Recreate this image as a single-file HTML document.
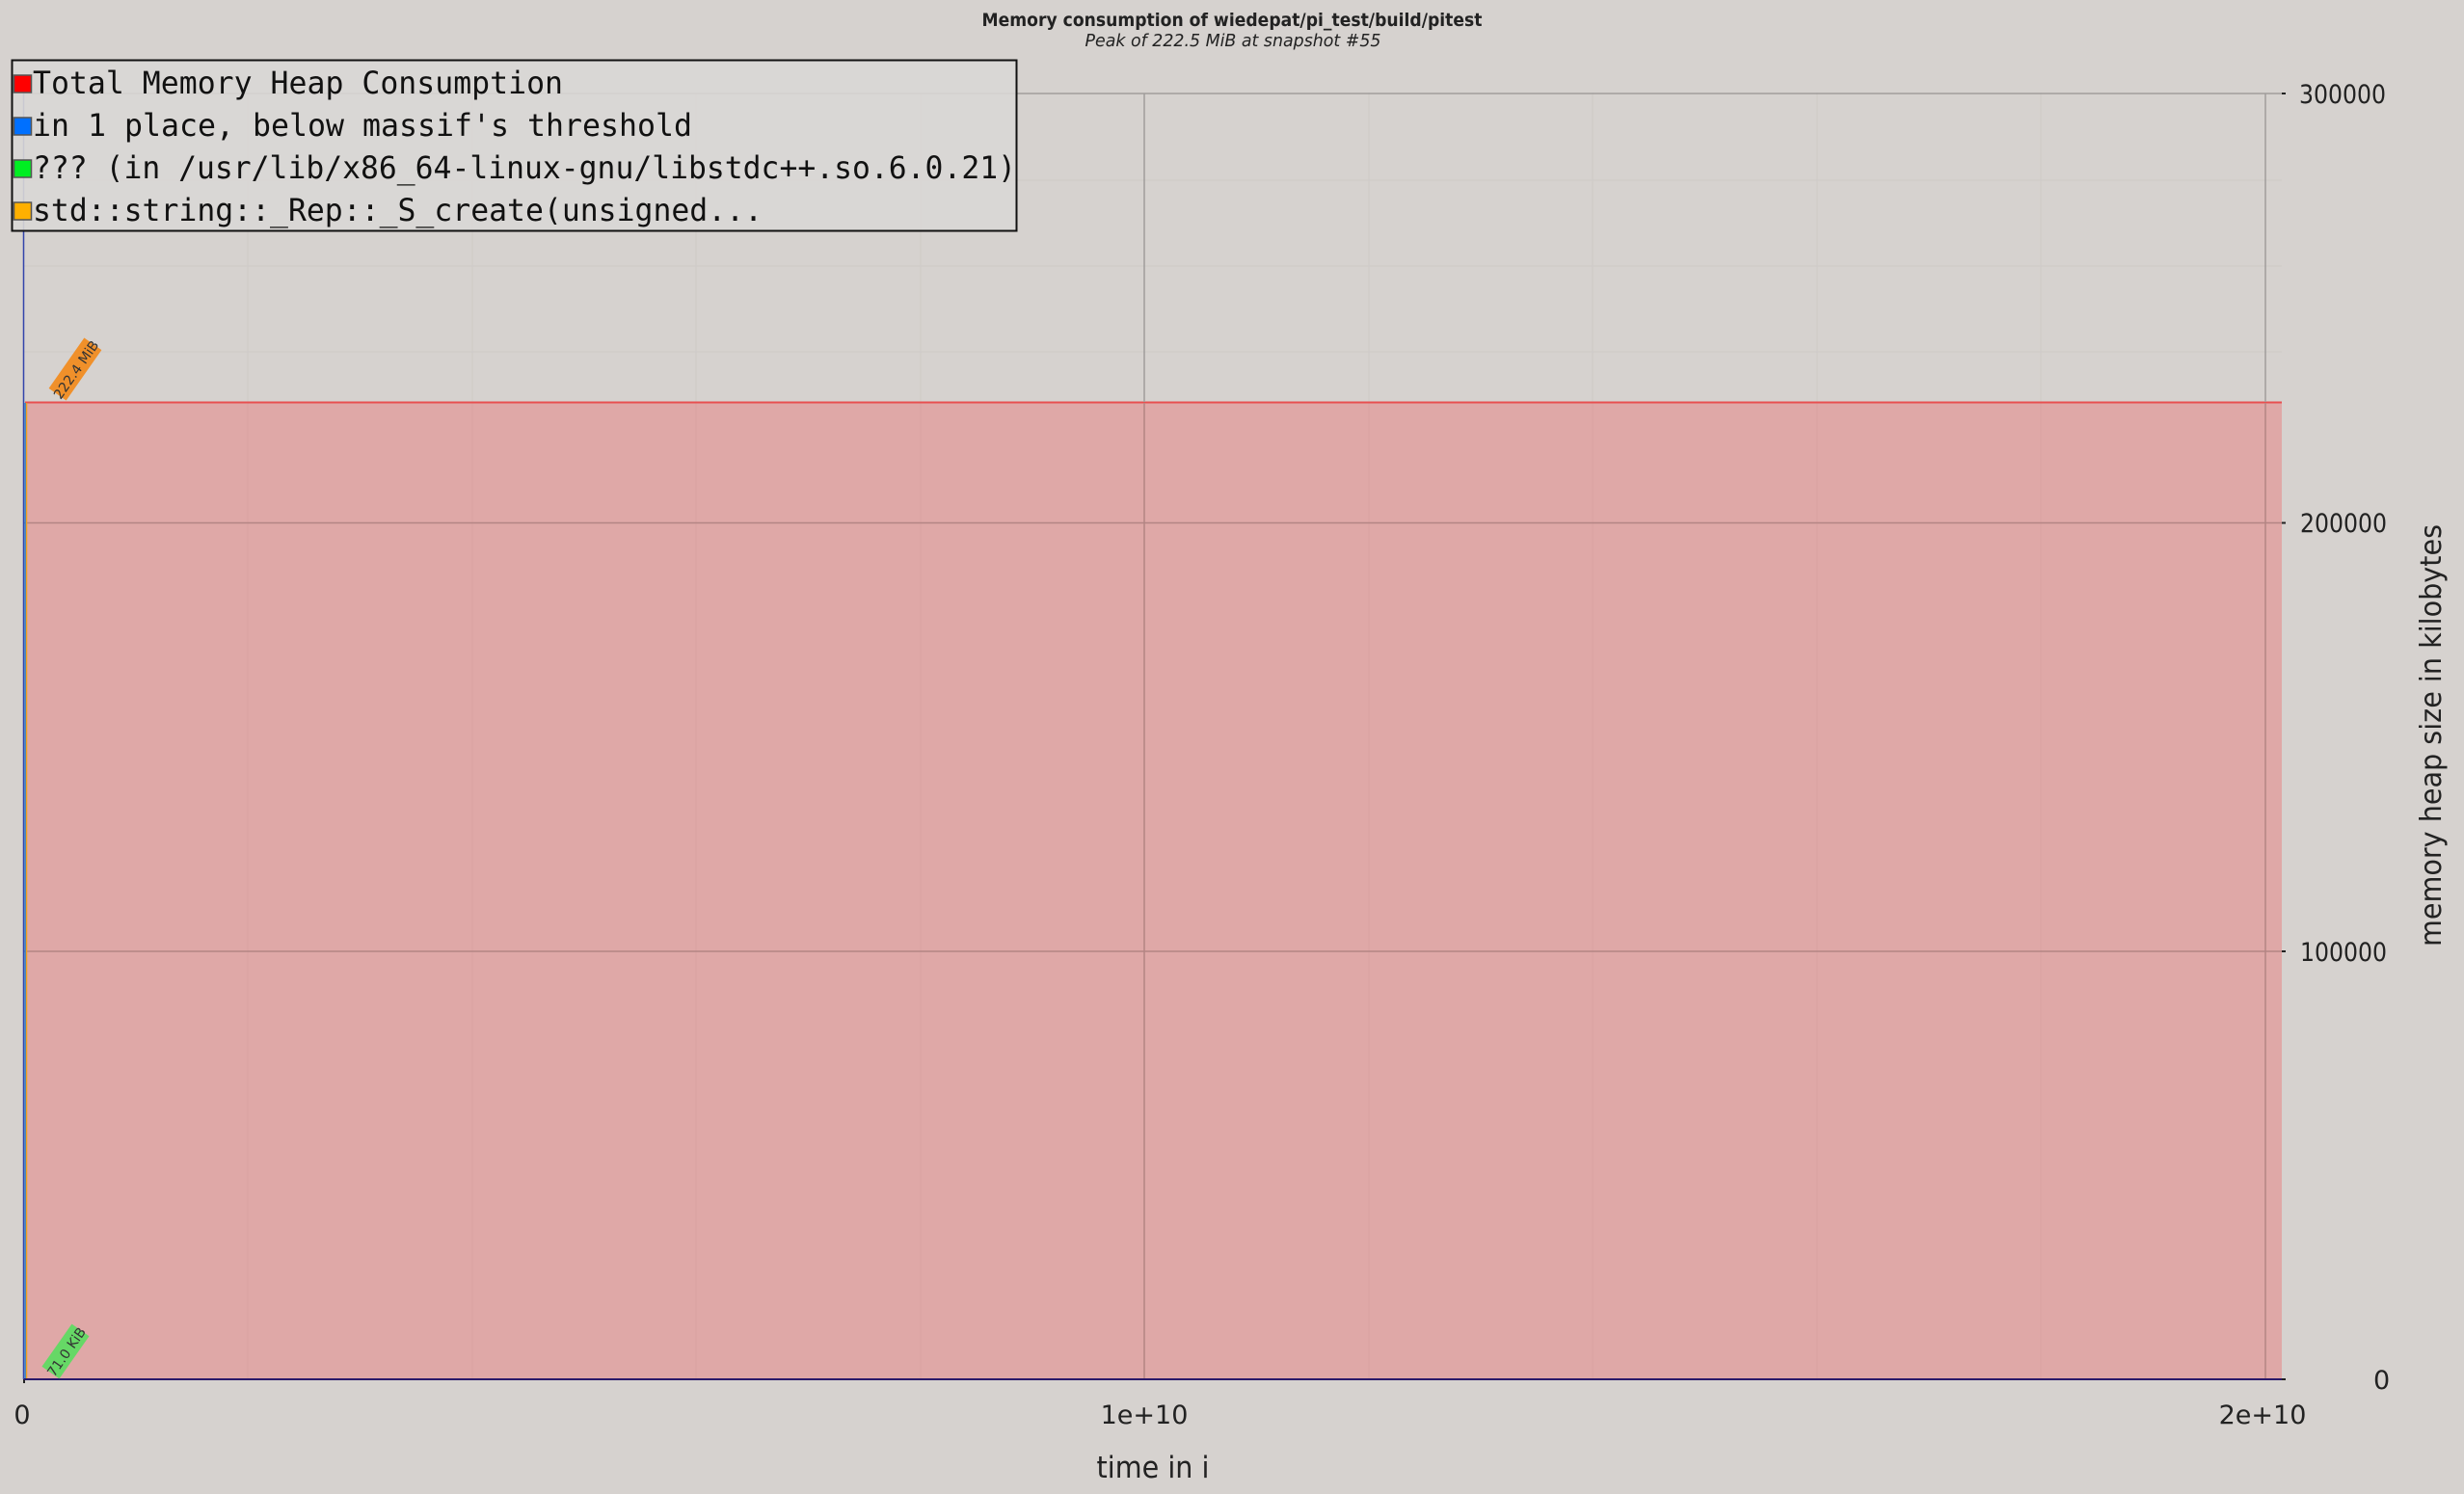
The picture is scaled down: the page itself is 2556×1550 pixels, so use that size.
<!DOCTYPE html>
<html><head><meta charset="utf-8"><style>
html,body{margin:0;padding:0;background:#d6d2cf;}
svg{display:block}
</style></head><body>
<svg width="2556" height="1550" viewBox="0 0 2556 1550" xmlns="http://www.w3.org/2000/svg">
<rect width="2556" height="1550" fill="#d6d2cf"/>
<text x="1278" y="27" text-anchor="middle" font-family="DejaVu Sans, Liberation Sans, sans-serif" font-weight="bold" font-size="19" fill="#222" textLength="519" lengthAdjust="spacingAndGlyphs">Memory consumption of wiedepat/pi_test/build/pitest</text>
<text x="1279" y="48" text-anchor="middle" font-family="DejaVu Sans, Liberation Sans, sans-serif" font-style="italic" font-size="18" fill="#222" textLength="307" lengthAdjust="spacingAndGlyphs">Peak of 222.5 MiB at snapshot #55</text>
<g stroke="#d0ccc9" stroke-width="1.5">
<line x1="25" y1="187" x2="2367" y2="187"/>
<line x1="25" y1="276" x2="2367" y2="276"/>
<line x1="25" y1="365" x2="2367" y2="365"/>
<line x1="257" y1="96" x2="257" y2="417"/>
<line x1="490" y1="96" x2="490" y2="417"/>
<line x1="722" y1="96" x2="722" y2="417"/>
<line x1="955" y1="96" x2="955" y2="417"/>
<line x1="1420" y1="96" x2="1420" y2="417"/>
<line x1="1652" y1="96" x2="1652" y2="417"/>
<line x1="1885" y1="96" x2="1885" y2="417"/>
<line x1="2117" y1="96" x2="2117" y2="417"/>
</g>
<rect x="26" y="418" width="2341" height="1013" fill="#dfa8a7"/>
<g stroke="#dba4a3" stroke-width="1.5">
<line x1="257" y1="418" x2="257" y2="1431"/><line x1="490" y1="418" x2="490" y2="1431"/>
<line x1="722" y1="418" x2="722" y2="1431"/><line x1="955" y1="418" x2="955" y2="1431"/>
<line x1="1420" y1="418" x2="1420" y2="1431"/><line x1="1652" y1="418" x2="1652" y2="1431"/>
<line x1="1885" y1="418" x2="1885" y2="1431"/><line x1="2117" y1="418" x2="2117" y2="1431"/>
</g>
<line x1="26" y1="417.5" x2="2367" y2="417.5" stroke="#e85050" stroke-width="2"/>
<g stroke="#a09d9b" stroke-width="1.5">
<line x1="25" y1="97" x2="2367" y2="97"/>
<line x1="1187" y1="97" x2="1187" y2="417"/>
<line x1="2350" y1="97" x2="2350" y2="417"/>
</g>
<g stroke="#b38584" stroke-width="1.5">
<line x1="25" y1="542.5" x2="2367" y2="542.5"/>
<line x1="25" y1="987" x2="2367" y2="987"/>
<line x1="1187" y1="418" x2="1187" y2="1431"/>
<line x1="2350" y1="418" x2="2350" y2="1431"/>
</g>
<g stroke="#222" stroke-width="2">
<line x1="2367" y1="97" x2="2371" y2="97"/><line x1="2367" y1="542.5" x2="2371" y2="542.5"/>
<line x1="2367" y1="987" x2="2371" y2="987"/><line x1="2367" y1="1431" x2="2371" y2="1431"/>
<line x1="25" y1="1431" x2="25" y2="1435"/>
</g>
<line x1="24.5" y1="96" x2="24.5" y2="1431" stroke="#3344aa" stroke-width="1.5"/>
<line x1="26.5" y1="418" x2="26.5" y2="1431" stroke="#1a7fe0" stroke-width="2"/>
<line x1="27.5" y1="418" x2="27.5" y2="1431" stroke="#f0a020" stroke-width="1.5"/>
<line x1="25" y1="1431" x2="2367" y2="1431" stroke="#2a1a6a" stroke-width="2"/>
<g transform="translate(78,383) rotate(-55)">
<rect x="-32" y="-11" width="64" height="22" fill="#f0902a"/>
<text x="0" y="6" text-anchor="middle" font-family="DejaVu Sans, sans-serif" font-size="14" fill="#333">222.4 MiB</text>
</g>
<g transform="translate(68,1402) rotate(-55)">
<rect x="-27" y="-11" width="54" height="22" fill="#66d866"/>
<text x="0" y="6" text-anchor="middle" font-family="DejaVu Sans, sans-serif" font-size="14" fill="#333">71.0 KiB</text>
</g>
<rect x="12.5" y="62.5" width="1042" height="177" fill="#d9d7d5" fill-opacity="0.9" stroke="#111" stroke-width="2"/>
<g stroke="#555" stroke-width="1.5">
<rect x="14.5" y="78" width="18" height="18" fill="#ff0000"/>
<rect x="14.5" y="122" width="18" height="18" fill="#0070ff"/>
<rect x="14.5" y="166" width="18" height="18" fill="#00ee22"/>
<rect x="14.5" y="210" width="18" height="18" fill="#ffb000"/>
</g>
<g font-family="DejaVu Sans Mono, Liberation Mono, monospace" font-size="32" fill="#111">
<text x="34" y="97" textLength="550" lengthAdjust="spacingAndGlyphs">Total Memory Heap Consumption</text>
<text x="34" y="141" textLength="684" lengthAdjust="spacingAndGlyphs">in 1 place, below massif's threshold</text>
<text x="34" y="185" textLength="1020" lengthAdjust="spacingAndGlyphs">??? (in /usr/lib/x86_64-linux-gnu/libstdc++.so.6.0.21)</text>
<text x="34" y="229" textLength="757" lengthAdjust="spacingAndGlyphs">std::string::_Rep::_S_create(unsigned...</text>
</g>
<g font-family="DejaVu Sans, Liberation Sans, sans-serif" font-size="27" fill="#222">
<text x="2385" y="107" textLength="90" lengthAdjust="spacingAndGlyphs">300000</text>
<text x="2386" y="552" textLength="90" lengthAdjust="spacingAndGlyphs">200000</text>
<text x="2386" y="997" textLength="90" lengthAdjust="spacingAndGlyphs">100000</text>
<text x="2462" y="1441">0</text>
<text x="23" y="1477" text-anchor="middle">0</text>
<text x="1187" y="1477" text-anchor="middle">1e+10</text>
<text x="2347" y="1477" text-anchor="middle">2e+10</text>
</g>
<text x="1196" y="1533" text-anchor="middle" font-family="DejaVu Sans, Liberation Sans, sans-serif" font-size="31" fill="#222" textLength="117" lengthAdjust="spacingAndGlyphs">time in i</text>
<text transform="translate(2532,763) rotate(-90)" text-anchor="middle" font-family="DejaVu Sans, Liberation Sans, sans-serif" font-size="30" fill="#222" textLength="438" lengthAdjust="spacingAndGlyphs">memory heap size in kilobytes</text>
</svg>
</body></html>
